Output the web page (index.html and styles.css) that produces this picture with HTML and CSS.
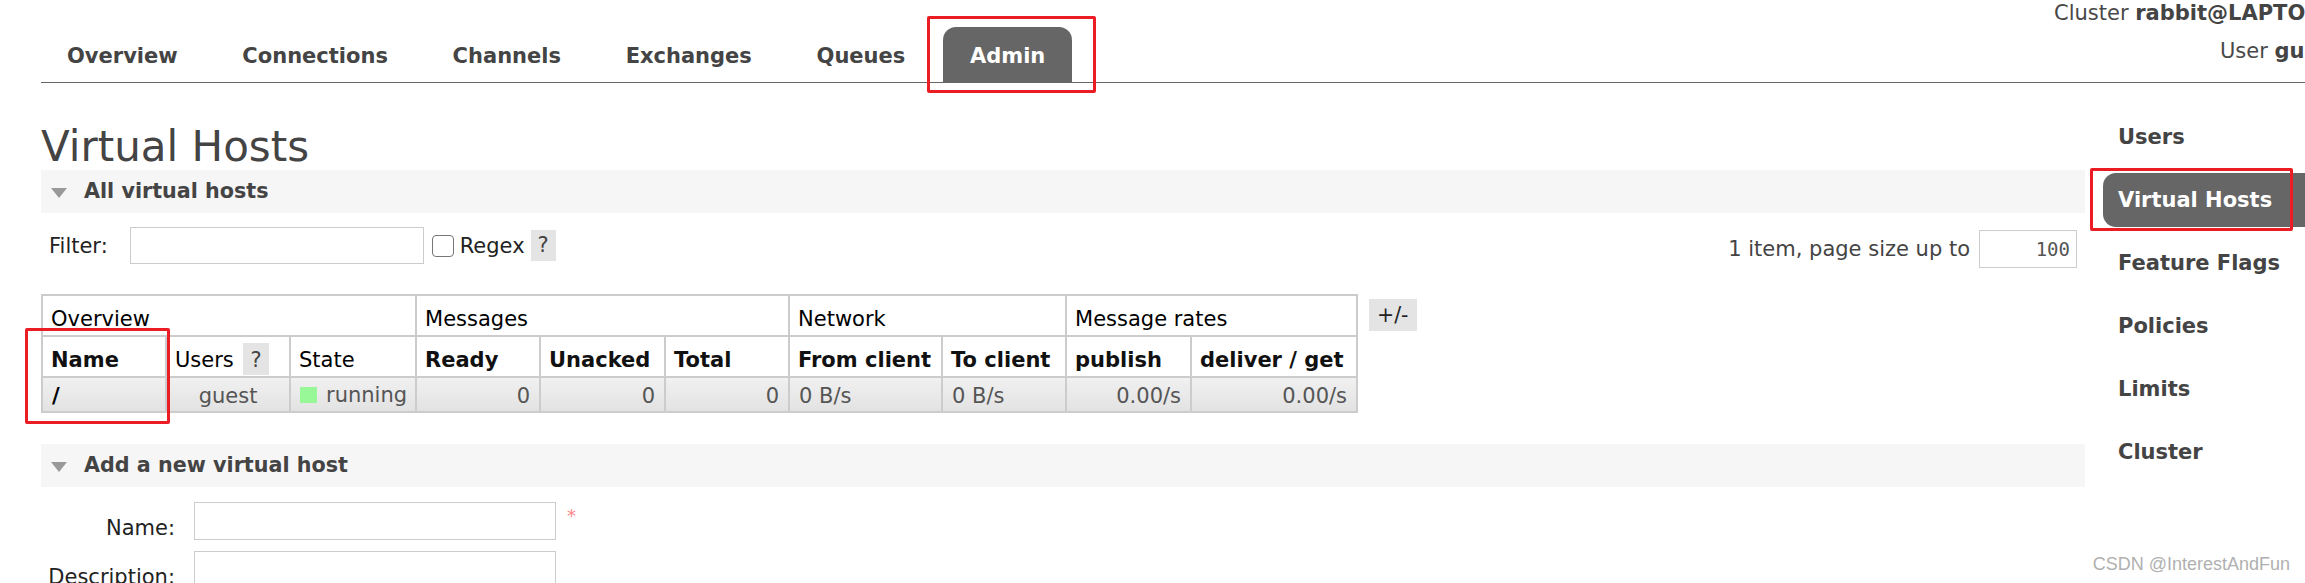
FILE: index.html
```html
<!DOCTYPE html>
<html lang="en">
<head>
<meta charset="utf-8">
<title>RabbitMQ Management - Virtual Hosts</title>
<link rel="stylesheet" href="styles.css">
</head>
<body>
<div class="header">
  <ul class="menu">
    <li><a class="tab">Overview</a></li>
    <li><a class="tab">Connections</a></li>
    <li><a class="tab">Channels</a></li>
    <li><a class="tab">Exchanges</a></li>
    <li><a class="tab">Queues</a></li>
    <li class="marked"><a class="tab active">Admin</a><span class="redbox redbox-admin"></span></li>
  </ul>
  <div class="login">
    <p class="login-line">Cluster <b>rabbit@LAPTOP</b></p>
    <p class="login-line user-line">User <b>guest</b></p>
  </div>
</div>

<div class="main">
  <div class="content">
    <h1 class="title">Virtual Hosts</h1>

    <div class="section">
      <h2 class="section-bar"><svg class="arrow" width="18" height="10" viewBox="0 0 18 10"><polygon points="1,0 17,0 9,10" fill="#999"/></svg>All virtual hosts</h2>
      <div class="filter-row">
        <div class="filter-left">
          <label class="filter-label">Filter:</label>
          <input class="text-input filter-input" type="text">
          <span class="checkbox"></span>
          <span class="regex">Regex</span>
          <span class="help">?</span>
        </div>
        <div class="filter-right">
          <span class="count">1 item, page size up to</span>
          <span class="page-size">100</span>
        </div>
      </div>

      <div class="table-row">
        <table class="list">
          <colgroup>
            <col class="c-name"><col class="c-users"><col class="c-state">
            <col class="c-ready"><col class="c-unacked"><col class="c-total">
            <col class="c-from"><col class="c-to">
            <col class="c-publish"><col class="c-deliver">
          </colgroup>
          <thead>
            <tr>
              <th colspan="3" class="group">Overview</th>
              <th colspan="3" class="group">Messages</th>
              <th colspan="2" class="group">Network</th>
              <th colspan="2" class="group">Message rates</th>
            </tr>
            <tr>
              <th class="sort name-head">Name<span class="redbox redbox-name"></span></th>
              <th class="plain-head">Users <span class="help-th">?</span></th>
              <th class="plain-head">State</th>
              <th class="sort">Ready</th>
              <th class="sort">Unacked</th>
              <th class="sort">Total</th>
              <th class="sort">From client</th>
              <th class="sort">To client</th>
              <th class="sort">publish</th>
              <th class="sort">deliver / get</th>
            </tr>
          </thead>
          <tbody>
            <tr class="alt1">
              <td class="vhost">/</td>
              <td class="center">guest</td>
              <td><span class="state"><span class="status-green"></span>running</span></td>
              <td class="r">0</td>
              <td class="r">0</td>
              <td class="r">0</td>
              <td>0 B/s</td>
              <td>0 B/s</td>
              <td class="r">0.00/s</td>
              <td class="r">0.00/s</td>
            </tr>
          </tbody>
        </table>
        <span class="plus-minus">+/-</span>
      </div>
    </div>

    <div class="section section-add">
      <h2 class="section-bar"><svg class="arrow" width="18" height="10" viewBox="0 0 18 10"><polygon points="1,0 17,0 9,10" fill="#999"/></svg>Add a new virtual host</h2>
      <div class="form">
        <label class="form-label">Name:</label>
        <input class="text-input form-input" type="text">
        <span class="mand">*</span>
        <label class="form-label">Description:</label>
        <input class="text-input form-input" type="text">
        <span></span>
      </div>
    </div>
  </div>

  <div class="rhs">
    <ul class="rhs-menu">
      <li><a class="rhs-item">Users</a></li>
      <li class="marked"><a class="rhs-item active">Virtual Hosts</a><span class="redbox redbox-rhs"></span></li>
      <li><a class="rhs-item">Feature Flags</a></li>
      <li><a class="rhs-item">Policies</a></li>
      <li><a class="rhs-item">Limits</a></li>
      <li><a class="rhs-item">Cluster</a></li>
    </ul>
  </div>
</div>

<div class="watermark">CSDN @InterestAndFun</div>
</body>
</html>
```

FILE: styles.css
```css
html, body {
  margin: 0;
  padding: 0;
  overflow: hidden;
  background: #fff;
}
body {
  font-family: "DejaVu Sans", Verdana, sans-serif;
  font-size: 21px;
  color: #484848;
  position: relative;
  height: 583px;
}

/* ---------- header ---------- */
.header {
  display: flex;
  align-items: flex-start;
  margin-left: 41px;
  height: 82px;
  border-bottom: 1px solid #666;
}
.menu {
  list-style: none;
  margin: 0 0 0 -1px;
  padding: 27px 0 0 0;
  display: flex;
  gap: 10.7px;
}
.menu li { position: relative; }
.tab {
  display: block;
  height: 55px;
  line-height: 53px;
  padding: 3px 27px 0 27px;
  box-sizing: border-box;
  font-size: 21px;
  font-weight: bold;
  color: #444;
  border-radius: 13px 13px 0 0;
}
.tab.active {
  background: #666;
  color: #fff;
}
.login {
  margin-left: auto;
  width: 251px;
  flex-shrink: 0;
  padding-top: 1px;
  white-space: nowrap;
  font-size: 21px;
  color: #484848;
}
.login-line {
  margin: 0;
  line-height: 25px;
}
.login-line b { color: #444; }
.user-line {
  padding-left: 166px;
  margin-top: 13px;
}

/* ---------- red annotation boxes ---------- */
.redbox {
  position: absolute;
  border: 3px solid #ec1c24;
  border-radius: 2px;
  pointer-events: none;
}
.redbox-admin { left: -16px; top: -11px; width: 163px; height: 71px; }
.redbox-name { left: -18px; top: -9px; width: 139px; height: 90px; }
.redbox-rhs { left: -13px; top: -5px; width: 197px; height: 57px; }

/* ---------- layout ---------- */
.main {
  display: flex;
  align-items: flex-start;
  margin-left: 41px;
  gap: 18px;
}
.content {
  width: 2044px;
  flex-shrink: 0;
}
.rhs {
  width: 300px;
  flex-shrink: 0;
}

.title {
  margin: 41px 0 0 0;
  font-size: 42px;
  line-height: 46px;
  font-weight: normal;
  color: #444;
}

/* ---------- section bars ---------- */
.section-bar {
  margin: 0;
  height: 43px;
  line-height: 43px;
  background: #f6f6f6;
  font-size: 20.7px;
  font-weight: bold;
  color: #444;
  display: flex;
  align-items: center;
  padding-left: 9px;
}
.arrow {
  margin-right: 16px;
  margin-top: 2px;
}

/* ---------- filter row ---------- */
.filter-row {
  display: flex;
  justify-content: space-between;
  align-items: flex-start;
  margin-top: 14px;
  padding: 0 8px;
}
.filter-left {
  display: flex;
  align-items: center;
  color: #222;
}
.filter-label { margin-right: 22px; }
.text-input {
  box-sizing: border-box;
  border: 1px solid #ccc;
  border-radius: 0;
  background: #fff;
  margin: 0;
  font: inherit;
}
.filter-input {
  width: 294px;
  height: 37px;
}
.checkbox {
  width: 20px;
  height: 20px;
  border: 1px solid #767676;
  border-radius: 4px;
  margin-left: 8px;
  margin-right: 6px;
  background: #fff;
}
.regex { margin-right: 6px; }
.help {
  display: inline-block;
  background: #e4e4e4;
  color: #444;
  padding: 0 7px;
  line-height: 31px;
}
.filter-right {
  display: flex;
  align-items: center;
  margin-top: 3px;
  color: #444;
}
.count { margin-right: 9px; }
.page-size {
  box-sizing: border-box;
  width: 98px;
  height: 38px;
  border: 1px solid #ccc;
  text-align: right;
  padding-right: 6px;
  font-family: "DejaVu Sans Mono", "Liberation Mono", monospace;
  font-size: 19px;
  line-height: 36px;
  color: #555;
}

/* ---------- table ---------- */
.table-row {
  display: flex;
  align-items: flex-start;
  margin-top: 26px;
  gap: 11px;
}
.list {
  border-collapse: collapse;
  table-layout: fixed;
  width: 1315px;
  border: 2px solid #ccc;
}
.c-name { width: 124px; }
.c-users { width: 124px; }
.c-state { width: 126px; }
.c-ready { width: 124px; }
.c-unacked { width: 125px; }
.c-total { width: 124px; }
.c-from { width: 153px; }
.c-to { width: 124px; }
.c-publish { width: 125px; }
.c-deliver { width: 166px; }

.list th, .list td {
  border: 2px solid #ccc;
  line-height: 24px;
  white-space: nowrap;
  text-align: left;
}
.list th {
  padding: 11px 8px 4px 8px;
  color: #000;
  font-weight: normal;
}
.list th.sort { font-weight: bold; color: #111; }
.name-head { position: relative; }
.help-th {
  background: #e4e4e4;
  color: #444;
  padding: 5px 7px 3px;
  margin-left: 3px;
}
.list td {
  padding: 5px 9px 3px 9px;
  color: #555;
}
.alt1 {
  background: linear-gradient(#f1f1f1, #e2e2e2);
}
.list td.r { text-align: right; }
.list td.center { text-align: center; }
.list td.vhost { font-weight: bold; color: #000; }
.state {
  display: inline-flex;
  align-items: center;
}
.status-green {
  display: inline-block;
  width: 17px;
  height: 16px;
  background: #98f898;
  margin-right: 9px;
}
.plus-minus {
  margin-top: 5px;
  display: inline-block;
  background: #e4e4e4;
  color: #222;
  padding: 0 8px;
  line-height: 32px;
  font-size: 20.5px;
}

/* ---------- add form ---------- */
.section-add { margin-top: 31px; }
.form {
  display: grid;
  grid-template-columns: 134px 362px auto;
  column-gap: 19px;
  row-gap: 11px;
  margin-top: 15px;
}
.form-label {
  text-align: right;
  padding-top: 14px;
  line-height: 24px;
  color: #222;
}
.form-input { height: 38px; }
.mand {
  color: #f88;
  margin-left: -8px;
  padding-top: 2px;
  line-height: 24px;
  font-size: 18px;
}

/* ---------- right menu ---------- */
.rhs-menu {
  list-style: none;
  margin: 0;
  padding: 27px 0 0 0;
  display: flex;
  flex-direction: column;
  gap: 9px;
}
.rhs-menu li { position: relative; }
.rhs-item {
  display: block;
  height: 54px;
  line-height: 54px;
  padding-left: 15px;
  font-size: 21px;
  font-weight: bold;
  color: #444;
  white-space: nowrap;
}
.rhs-item.active {
  background: #666;
  color: #fff;
  border-radius: 13px 0 0 13px;
}

/* ---------- watermark ---------- */
.watermark {
  position: absolute;
  right: 15px;
  top: 554px;
  font-family: "Liberation Sans", Arial, sans-serif;
  font-size: 18px;
  color: #b0b0b0;
  white-space: nowrap;
}
```
